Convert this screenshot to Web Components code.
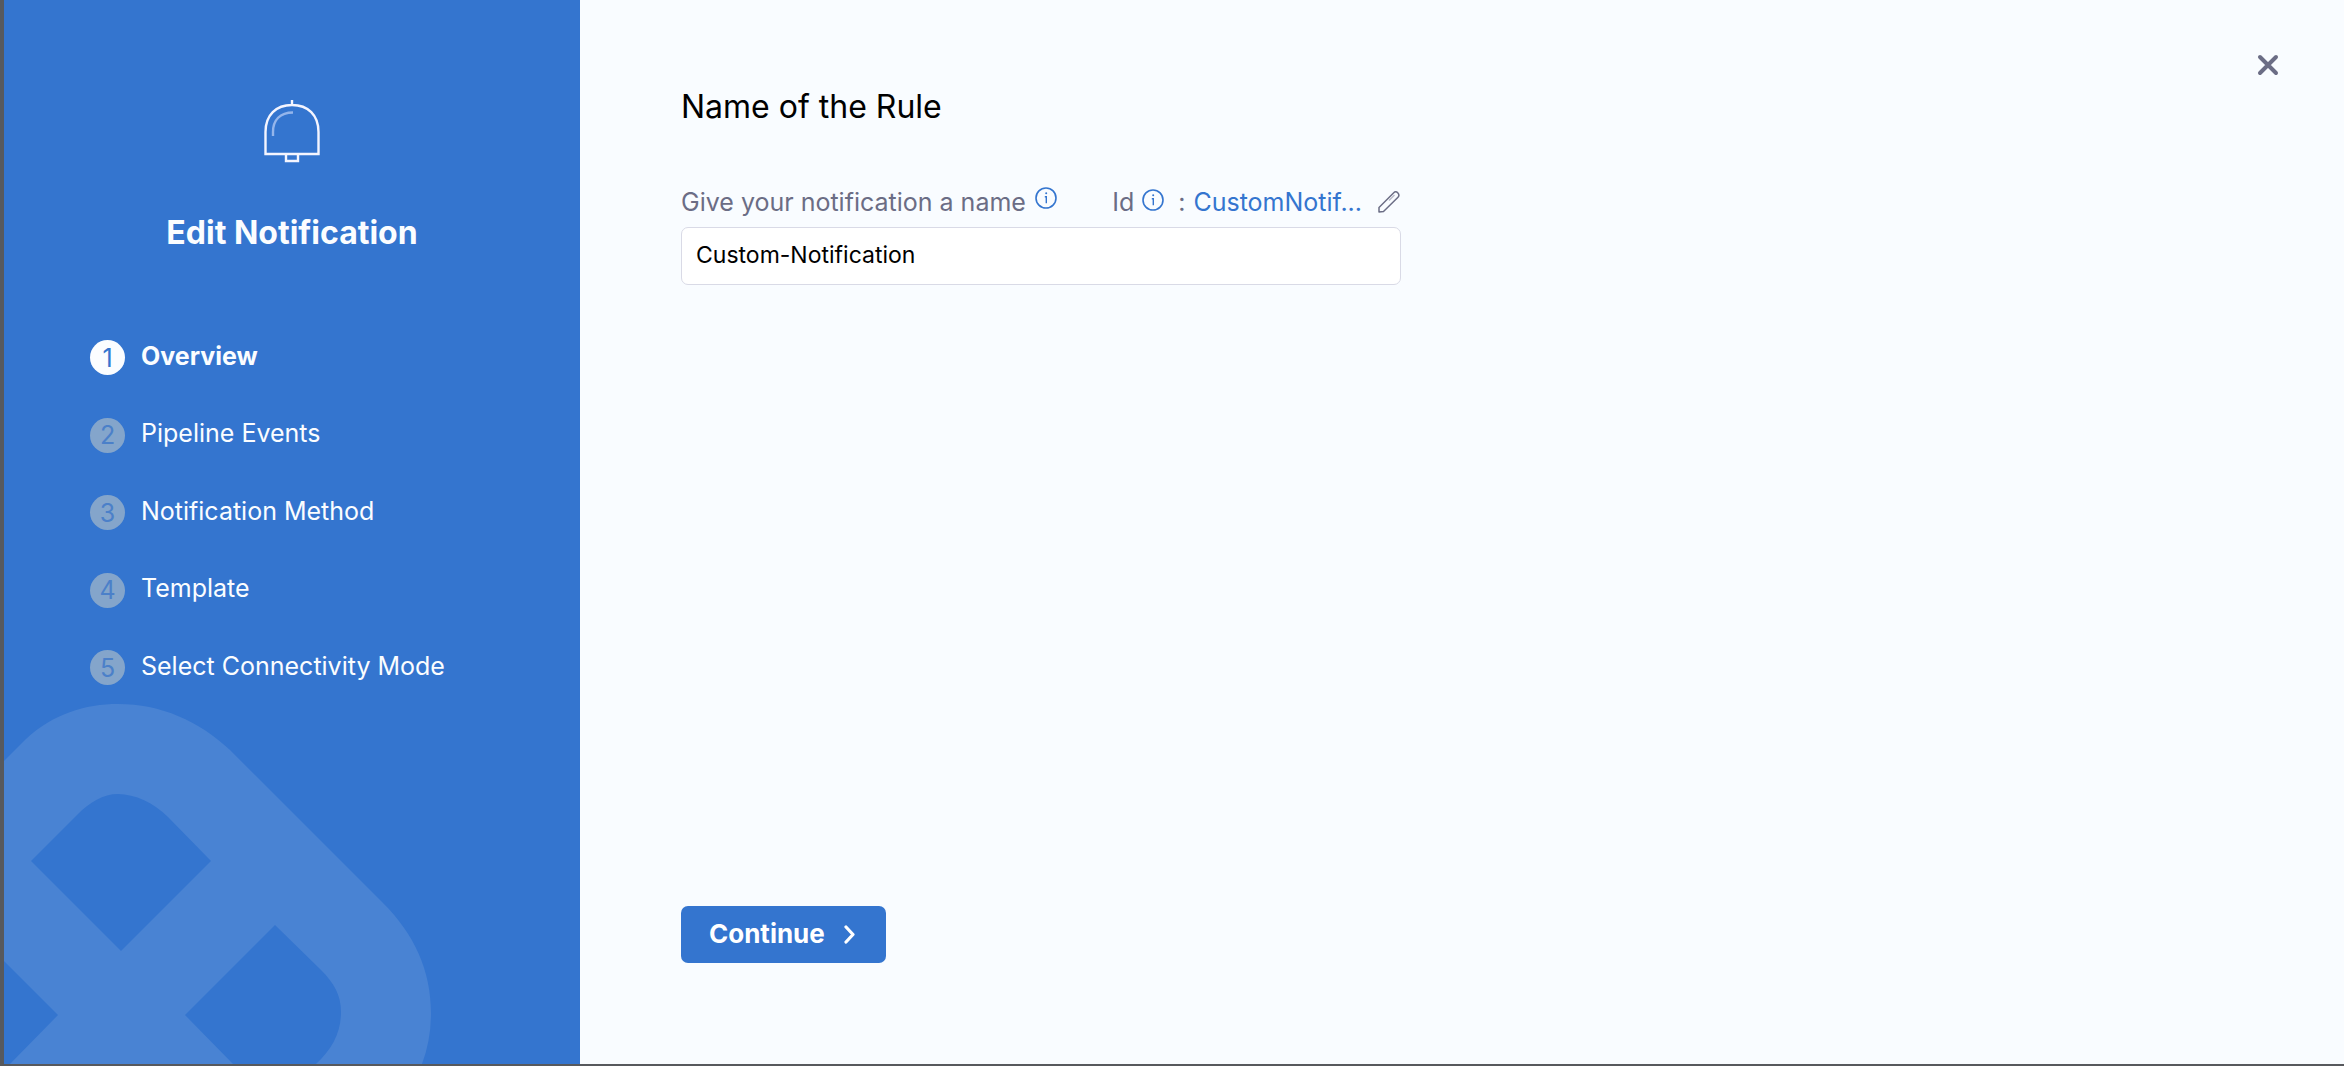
<!DOCTYPE html>
<html lang="en">
<head>
<meta charset="utf-8">
<title>Edit Notification</title>
<style>
  html, body { height: 100%; margin: 0; }
  body {
    --blue: #3475cf;
    --muted: #6b6d85;
    --paper: #f9fcff;
    font-family: Inter, "Liberation Sans", sans-serif;
    font-size: 25px;
    background: var(--paper);
  }
</style>
</head>
<body>
<notification-wizard>
  <wizard-sidebar slot="sidebar" heading="Edit Notification">
    <wizard-step number="1" active>Overview</wizard-step>
    <wizard-step number="2">Pipeline Events</wizard-step>
    <wizard-step number="3">Notification Method</wizard-step>
    <wizard-step number="4">Template</wizard-step>
    <wizard-step number="5">Select Connectivity Mode</wizard-step>
  </wizard-sidebar>
  <rule-form>
    <span slot="title">Name of the Rule</span>
    <name-id-field slot="fields" label="Give your notification a name" value="Custom-Notification" identifier="CustomNotif..."></name-id-field>
    <primary-button slot="actions">Continue</primary-button>
  </rule-form>
</notification-wizard>

<script>
class BaseElement extends HTMLElement {
  constructor() {
    super();
    this.attachShadow({ mode: "open" });
  }
  connectedCallback() {
    this.shadowRoot.innerHTML = "<style>*{box-sizing:border-box}</style>" + this.render();
  }
}

class NotificationWizard extends BaseElement {
  render() {
    return `
      <style>
        :host { display: flex; box-sizing: border-box; min-height: 100vh; border-left: 4px solid #57595d; border-bottom: 2px solid #57595d; }
        main { flex: 1; display: flex; align-items: flex-start; justify-content: space-between; align-self: stretch; }
        main ::slotted(*) { align-self: stretch; }
        close-button { margin: 48px 60px 0 0; }
      </style>
      <slot name="sidebar"></slot>
      <main><slot></slot><close-button></close-button></main>`;
  }
}

class WizardSidebar extends BaseElement {
  render() {
    return `
      <style>
        :host { display: flex; flex-direction: column; flex: 0 0 576px; position: relative; overflow: hidden; background: var(--blue); color: #fbfdff; padding-top: 98px; box-sizing: border-box; }
        header { display: flex; flex-direction: column; align-items: center; gap: 49px; }
        h1 { margin: 0; font-size: 32px; line-height: 40px; font-weight: 700; }
        nav { position: relative; display: flex; flex-direction: column; justify-content: space-between; height: 345px; margin: 87px 24px 0 86px; }
        .bell { width: 60px; height: 66px; display: block; }
        .mark { position: absolute; left: 0; bottom: 0; width: 430px; height: 362px; }
      </style>
      <svg class="mark" viewBox="4 702 430 362" aria-hidden="true">
        <path fill="#4983d3" fill-rule="evenodd" d="M4 761L26 739C53 714 85 704 118 704C161 704 199 721 230 750L383 903C414 934 431 970 431 1013Q431 1040 422 1064H316C332 1049 341 1033 341 1012C341 995 334 983 321 970L275 925L185 1015L233 1064H10L58 1015L4 961ZM31 861L77 815C90 802 103 794 118 794C135 794 154 803 168 817L211 861L121 951Z"/>
      </svg>
      <header>
        <svg class="bell" viewBox="262 98 60 66" fill="none" stroke="#f4f5ff" stroke-width="2.4" aria-hidden="true">
          <path d="M292 100V105M265.500 154V132C265.500 115 276 105 292 105S318.500 115 318.500 132V154Z"/>
          <path d="M286 154V161H298V154"/>
          <path stroke="#94b5eb" d="M273 136V132C273 120 280 112.500 293 112.500"/>
        </svg>
        <h1>${this.getAttribute("heading")}</h1>
      </header>
      <nav aria-label="Steps"><slot></slot></nav>`;
  }
}

class WizardStep extends BaseElement {
  render() {
    return `
      <style>
        :host { display: flex; align-items: center; gap: 16px; height: 35px; line-height: 32px; }
        :host([active]) { font-weight: 700; }
        .num { display: flex; align-items: center; justify-content: center; width: 35px; height: 35px; border-radius: 50%; background: #84a5cb; color: #4b80c9; font-weight: 400; }
        :host([active]) .num { background: #fbfdff; color: var(--blue); }
        .text { padding-bottom: 4px; }
      </style>
      <span class="num">${this.getAttribute("number")}</span><span class="text"><slot></slot></span>`;
  }
}

class RuleForm extends BaseElement {
  render() {
    return `
      <style>
        :host { display: flex; flex-direction: column; box-sizing: border-box; width: 821px; padding: 87px 0 101px 101px; }
        h2 { margin: 0; font-size: 32px; line-height: 40px; font-weight: 400; color: #000; }
        .fields { margin-top: 57px; }
        .actions { margin-top: auto; }
      </style>
      <h2><slot name="title"></slot></h2>
      <div class="fields"><slot name="fields"></slot></div>
      <div class="actions"><slot name="actions"></slot></div>`;
  }
}

class InfoIcon extends BaseElement {
  render() {
    return `
      <style>:host { display: block; } svg { display: block; width: 22px; height: 22px; }</style>
      <svg viewBox="0 0 22 22" fill="none" stroke="#3475cf" aria-hidden="true">
        <circle cx="11" cy="11" r="10" stroke-width="1.600"/>
        <path stroke-width="1.400" d="M9.800 9.700H11.300V16.200"/>
        <circle cx="11.200" cy="6.300" r="1" fill="#3475cf" stroke="none"/>
      </svg>`;
  }
}

class NameIdField extends BaseElement {
  render() {
    return `
      <style>
        :host { display: flex; flex-direction: column; gap: 7px; }
        .row { display: flex; justify-content: space-between; line-height: 36px; color: var(--muted); }
        .name, .id { display: flex; align-items: center; }
        .name { gap: 9px; }
        .name info-icon { padding-bottom: 8px; }
        .id info-icon { padding-bottom: 4px; margin: 0 14px 0 8px; }
        .value { color: var(--blue); margin-left: 8px; }
        button { border: 0; padding: 0; background: none; margin: 0 1px 0 16px; display: block; }
        button svg { display: block; width: 22px; height: 22px; }
        input { width: 100%; height: 58px; border: 1px solid #d9dae6; border-radius: 7px; padding: 0 14px 2px; background: #fff; color: #000; font: inherit; font-size: 23px; outline: 0; }
      </style>
      <div class="row">
        <div class="name"><label for="name">${this.getAttribute("label")}</label><info-icon></info-icon></div>
        <div class="id"><span>Id</span><info-icon></info-icon><span>:</span><span class="value">${this.getAttribute("identifier")}</span>
          <button type="button" aria-label="Edit id"><svg viewBox="0 0 22 22" fill="none" stroke="#6b6d85" stroke-width="1.500" stroke-linejoin="round"><path d="M1 21V16.500L15.500 2C17 .5 18.500 .5 19.700 1.800S21.500 4.700 20 6.200L5.500 20.500Z"/><path stroke="#b9bac8" d="M11 9.500L16.500 4"/></svg></button></div>
      </div>
      <input id="name" type="text" value="${this.getAttribute("value")}">`;
  }
}

class PrimaryButton extends BaseElement {
  render() {
    return `
      <style>
        :host { display: block; }
        button { display: flex; align-items: center; justify-content: space-between; width: 205px; height: 57px; border: 0; border-radius: 7px; padding: 0 30px 2px 28px; background: var(--blue); color: #fff; font: inherit; font-size: 26px; font-weight: 700; }
        svg { width: 13px; height: 20px; }
      </style>
      <button type="button"><slot></slot><svg viewBox="0 0 13 20" fill="none" stroke="#fff" stroke-width="3.200" stroke-linecap="round" stroke-linejoin="round" aria-hidden="true"><path d="M3 3L10 10.500L3 18"/></svg></button>`;
  }
}

class CloseButton extends BaseElement {
  render() {
    return `
      <style>
        :host { display: block; }
        button { display: block; padding: 4px; border: 0; background: none; }
        svg { display: block; width: 24px; height: 24px; }
      </style>
      <button type="button" aria-label="Close"><svg viewBox="0 0 24 24" fill="none" stroke="#6b6d85" stroke-width="4" stroke-linecap="round"><path d="M4 5L20 21M20 5L4 21"/></svg></button>`;
  }
}

customElements.define("info-icon", InfoIcon);
customElements.define("close-button", CloseButton);
customElements.define("primary-button", PrimaryButton);
customElements.define("name-id-field", NameIdField);
customElements.define("rule-form", RuleForm);
customElements.define("wizard-step", WizardStep);
customElements.define("wizard-sidebar", WizardSidebar);
customElements.define("notification-wizard", NotificationWizard);
</script>
</body>
</html>
